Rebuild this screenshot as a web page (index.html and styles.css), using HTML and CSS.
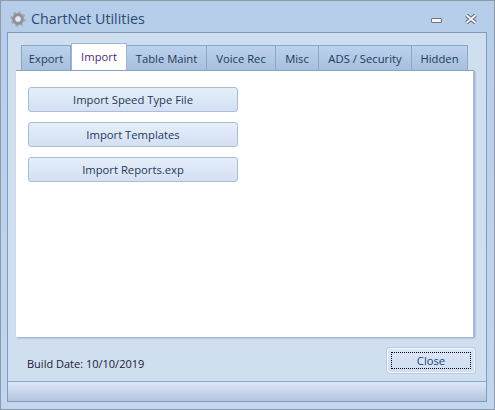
FILE: index.html
```html
<!DOCTYPE html>
<html lang="en">

<head>
    <meta charset="UTF-8">
    <meta name="viewport" content="width=device-width, initial-scale=1.0">
    <title>ChartNet Utilities</title>
    <link rel="stylesheet" href="styles.css">
</head>

<body>

    <div class="window">
        <!-- title bar -->
        <div class="titlebar">
            <svg class="app-icon" width="16" height="16" viewBox="0 0 16 16">
                <circle cx="8" cy="8" r="6.6" fill="none" stroke="#a9abaf" stroke-width="2.4" stroke-dasharray="2.6 2.58"></circle>
                <circle cx="8" cy="8" r="4.4" fill="none" stroke="#8f9196" stroke-width="3"></circle>
                <circle cx="8" cy="8" r="2.6" fill="#e4e7ec"></circle>
            </svg>
            <span class="title">ChartNet Utilities</span>
            <div class="caption-btn min-btn"><div class="min-glyph"></div></div>
            <div class="caption-btn close-btn">
                <svg width="12" height="10" viewBox="0 0 12 10">
                    <path d="M1.5 1.2 L10.5 8.8 M10.5 1.2 L1.5 8.8" stroke="#5f6773" stroke-width="3.8"></path>
                    <path d="M1.5 1.2 L10.5 8.8 M10.5 1.2 L1.5 8.8" stroke="#f4f6fa" stroke-width="1.8"></path>
                </svg>
            </div>
        </div>

        <div class="client">
            <div class="main">
                <!-- tabs -->
                <div class="tabs">
                    <div class="tab tab-export">Export</div>
                    <div class="tab tab-active tab-import">Import</div>
                    <div class="tab tab-table">Table Maint</div>
                    <div class="tab tab-voice">Voice Rec</div>
                    <div class="tab tab-misc">Misc</div>
                    <div class="tab tab-ads">ADS / Security</div>
                    <div class="tab tab-hidden">Hidden</div>
                </div>

                <div class="page">
                    <div class="btn">Import Speed Type File</div>
                    <div class="btn">Import Templates</div>
                    <div class="btn">Import Reports.exp</div>
                </div>

                <div class="footer">
                    <span class="build">Build Date: 10/10/2019</span>
                    <div class="close-action"><div class="focus-box">Close</div></div>
                </div>
            </div>

            <div class="statusbar"></div>
        </div>
    </div>

</body>

</html>
```

FILE: styles.css
```css
* {
    box-sizing: border-box;
}

html,
body {
    margin: 0;
    width: 495px;
    height: 410px;
    overflow: hidden;
}

body {
    font-family: "Open Sans", "Noto Sans", sans-serif;
    font-size: 11.25px;
    color: #1e395b;
}

.window {
    width: 495px;
    height: 410px;
    border: 1px solid #8f9aa8;
    background: linear-gradient(#b6cdea, #c3d6f0);
    padding: 0 7px 7px 6px;
    display: flex;
    flex-direction: column;
}

.titlebar {
    height: 31px;
    flex: none;
    display: flex;
    align-items: center;
    padding: 4px 0 0 3px;
}

.app-icon {
    margin-right: 5px;
}

.title {
    flex: 1;
    font-size: 14.25px;
    color: #2a4a72;
}

.caption-btn {
    display: flex;
    justify-content: center;
    align-items: center;
}

.min-btn {
    width: 12px;
    height: 6px;
    margin-right: 23px;
    margin-top: 4px;
}

.min-glyph {
    width: 11px;
    height: 5px;
    background: #f2f4f8;
    border: 1px solid #6d747e;
    border-radius: 1px;
}

.close-btn {
    width: 12px;
    height: 10px;
    margin-right: 10px;
}

.client {
    flex: 1;
    border: 1px solid #7f9cbd;
    background-color: #cfdff0;
    display: flex;
    flex-direction: column;
}

.main {
    flex: 1;
    padding: 10px 12px 0 8px;
    display: flex;
    flex-direction: column;
}

.tabs {
    height: 27px;
    flex: none;
    display: flex;
    align-items: flex-end;
    padding-left: 5px;
}

.tab {
    height: 25px;
    flex: none;
    border: 1px solid #8aa6c6;
    border-bottom: 0;
    border-left-width: 0;
    background: linear-gradient(#bcd1ec, #a7c0de);
    display: flex;
    justify-content: center;
    align-items: center;
    padding-top: 1px;
}

.tab-export {
    width: 50px;
    border-left-width: 1px;
}

.tab-active {
    height: 27px;
    background: #fff;
    border: 1px solid #9db5d2;
    border-bottom: 0;
    color: #4d2a7a;
    padding-top: 0;
    padding-bottom: 1px;
}

.tab-import {
    width: 56px;
}

.tab-table {
    width: 80px;
}

.tab-voice {
    width: 69px;
}

.tab-misc {
    width: 43px;
}

.tab-ads {
    width: 93px;
}

.tab-hidden {
    width: 56px;
}

.page {
    width: 458px;
    height: 267px;
    flex: none;
    background-color: #fff;
    border-top: 1px solid #8aa6c6;
    border-right: 1px solid #a9bcd3;
    box-shadow: 1px 1px 2px #8ea4bf;
    padding: 16px 0 0 12px;
    display: flex;
    flex-direction: column;
    gap: 10px;
}

.btn {
    width: 210px;
    height: 25px;
    border: 1px solid #a9bdd8;
    border-radius: 3px;
    background: linear-gradient(#e6eefa, #d3e0f3);
    display: flex;
    justify-content: center;
    align-items: center;
}

.footer {
    flex: 1;
    display: flex;
    justify-content: space-between;
    align-items: flex-start;
    padding: 11px 0 0 11px;
}

.build {
    margin-top: 8px;
    font-size: 11px;
    color: #1a1a33;
}

.close-action {
    width: 88px;
    height: 25px;
    margin-right: -1px;
    padding: 3px;
    border: 1px solid #f3f7fc;
    border-radius: 3px;
    background: linear-gradient(#dbe7f7, #d0def2);
    box-shadow: 0 0 0 1px #bccde3;
}

.focus-box {
    height: 100%;
    border: 1px dotted #000;
    display: flex;
    justify-content: center;
    align-items: center;
    color: #24427a;
}

.statusbar {
    height: 20px;
    flex: none;
    border-top: 1px solid #8ba6c6;
    background: linear-gradient(#dde7f8, #b3c5dd);
}
```
